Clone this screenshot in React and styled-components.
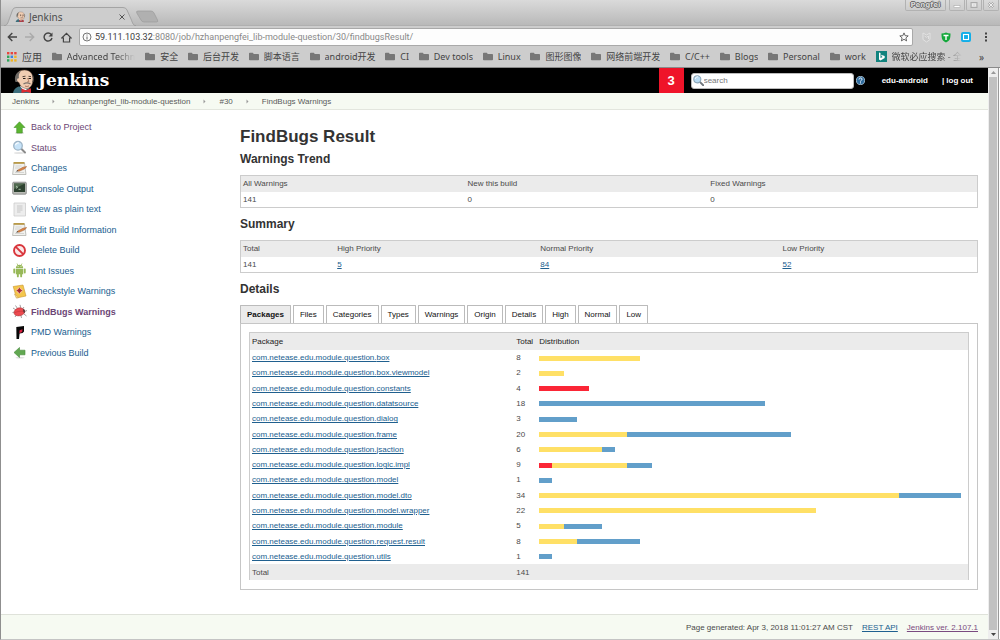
import React from "react";
import styled, { createGlobalStyle, css } from "styled-components";

const Global = createGlobalStyle`
  * { box-sizing: border-box; }
  body { margin: 0; background: #fff; color: #4a4a4a; font: 8px/12px "Liberation Sans", Arial, sans-serif; }
  button { padding: 0; border: 0; background: none; color: inherit; font: inherit; }
  svg { display: block; flex: none; }
  ul, ol { margin: 0; padding: 0; list-style: none; }
`;

const uiFont = css`font-family: "Noto Sans", "Noto Sans CJK SC", sans-serif;`;

/* ---------- browser frame ---------- */

const Window = styled.div`
  display: flex;
  flex-direction: column;
  min-height: 100vh;
  border-left: 1px solid #8f8f8f;
  border-bottom: 1px solid #c4c4c4;
`;

const TitleBar = styled.div`
  display: flex;
  align-items: flex-end;
  height: 26px;
  background: linear-gradient(#dadada, #b9b9b9);
  border-bottom: 1px solid #b0b0b0;
  ${uiFont}
`;

const TabShape = styled.div`
  position: relative;
  width: 132px;
  height: 19px;
  margin-bottom: -1px;
  margin-left: 3px;
  > svg { position: absolute; inset: 0; }
`;

const TabContent = styled.div`
  position: relative;
  display: flex;
  align-items: center;
  gap: 3px;
  height: 19px;
  padding: 0 11px;
  color: #4c4c4c;
  font-size: 10px;
  button { margin-left: auto; }
`;

const WindowButtons = styled.div`
  display: flex;
  align-self: flex-start;
  gap: 1px;
  margin-left: auto;
  padding-right: 1px;
`;

const WindowButton = styled.button`
  display: flex;
  align-items: center;
  justify-content: center;
  width: ${(p) => (p.$wide ? 41 : 16)}px;
  height: 11px;
  margin-right: ${(p) => (p.$wide ? 2 : 0)}px;
  border: 1px solid #b2b2b2;
  border-top: 0;
  border-radius: 0 0 2px 2px;
  color: #d8d8d8;
  font: bold 7px/10px "DejaVu Sans", sans-serif;
  text-shadow: 1px 0 #666, -1px 0 #666, 0 1px #666, 0 -1px #666;
`;

const Toolbar = styled.div`
  display: flex;
  align-items: center;
  gap: 8px;
  height: 22px;
  padding: 0 9px 0 6px;
  background: #cdcdcd;
`;

const IconButton = styled.button`
  display: flex;
  align-items: center;
  justify-content: center;
  width: 10px;
  height: 14px;
`;

const AddressBar = styled.label`
  display: flex;
  flex: 1;
  align-items: center;
  gap: 3px;
  height: 18px;
  padding: 0 3px 0 2px;
  border: 1px solid #a9a9a9;
  border-radius: 2px;
  background: #fdfdfd;
`;

const Url = styled.div`
  flex: 1;
  color: #888;
  font: 9px/12px Roboto, sans-serif;
  b { color: #3c3c3c; font-weight: 400; }
`;

const Extensions = styled.div`
  display: flex;
  align-items: center;
  gap: 10px;
`;

const Bookmarks = styled.nav`
  display: flex;
  align-items: center;
  justify-content: space-between;
  height: 20px;
  padding: 0 16px 2px 6px;
  border-bottom: 1px solid #8a8a8a;
  background: #cdcdcd;
`;

const Bookmark = styled.a`
  display: flex;
  align-items: center;
  gap: 5px;
  margin-left: ${(p) => (p.$apart ? 7 : 0)}px;
  color: #444;
  font-size: ${(p) => (p.$large ? 10 : 9)}px;
  white-space: nowrap;
  text-decoration: none;
  ${uiFont}
  span {
    max-width: 72px;
    overflow: hidden;
    ${(p) => p.$fade && css`mask-image: linear-gradient(90deg, #000 72%, transparent);`}
  }
`;

const Viewport = styled.div`
  display: flex;
  flex: 1;
`;

const Page = styled.div`
  display: flex;
  flex: 1;
  flex-direction: column;
  min-width: 0;
`;

const ScrollTrack = styled.div`
  display: flex;
  flex-direction: column;
  align-items: center;
  justify-content: space-between;
  width: 11px;
  margin-right: 1px;
  border-right: 1px solid #999;
  background: #eee;
`;

const ScrollArrow = styled.button`
  display: flex;
  align-items: center;
  justify-content: center;
  width: 9px;
  height: 9px;
`;

const ScrollThumb = styled.div`
  flex: 1;
  width: 8px;
  background: #c1c1c1;
`;

/* ---------- Jenkins page ---------- */

const Header = styled.header`
  display: flex;
  align-items: center;
  height: 25px;
  padding: 0 15px 0 11px;
  background: #000;
  color: #fff;
`;

const Brand = styled.a`
  display: flex;
  align-items: center;
  gap: 2px;
  margin-right: auto;
  color: #fff;
  font: bold 17px/25px "DejaVu Serif", serif;
  text-decoration: none;
`;

const Notice = styled.a`
  width: 25px;
  margin-right: 7px;
  background: #ef1429;
  color: #fff;
  font-size: 13px;
  font-weight: 700;
  line-height: 25px;
  text-align: center;
  text-decoration: none;
`;

const SearchBox = styled.label`
  display: flex;
  align-items: center;
  width: 163px;
  height: 16px;
  margin-right: 2px;
  padding: 0 1px;
  border: 1px solid #bbb;
  border-radius: 3px;
  background: #fff;
  input {
    flex: 1;
    min-width: 0;
    padding: 0;
    border: 0;
    outline: 0;
    background: none;
    font: inherit;
  }
  input::placeholder { color: #777; opacity: 1; }
`;

const HeaderLink = styled.a`
  margin-left: ${(p) => p.$gap}px;
  color: #fff;
  font-weight: 700;
  text-decoration: none;
`;

const Breadcrumbs = styled.ol`
  display: flex;
  align-items: center;
  gap: 13px;
  height: 17px;
  padding: 1px 0 0 11px;
  border-bottom: 1px solid #e3e6de;
  background: #f6faf2;
  li { display: flex; align-items: center; gap: 13px; }
  a { color: #5a5a5a; text-decoration: none; }
`;

const Body = styled.div`
  display: flex;
  flex: 1;
`;

const Sidebar = styled.nav`
  width: 239px;
  padding: 7px 11px;
`;

const TaskList = styled.ul`
  display: grid;
  grid-auto-rows: 1fr;
  height: 246px;
`;

const Task = styled.a`
  display: flex;
  align-items: center;
  gap: 4px;
  height: 100%;
  color: ${(p) => (p.$visited ? "#6b4675" : "#20608f")};
  font-size: 9px;
  font-weight: ${(p) => (p.$current ? 700 : 400)};
  text-decoration: none;
`;

const Main = styled.main`
  flex: 1;
  min-width: 0;
  padding: 17px 10px 24px 0;
`;

const Title = styled.h1`
  margin: 0 0 3px;
  color: #333;
  font-size: 17px;
  line-height: 20px;
`;

const Heading = styled.h2`
  margin: 0 0 7px;
  color: #333;
  font-size: 12px;
  line-height: 18px;
`;

const Table = styled.table`
  width: 100%;
  height: ${(p) => p.$height}px;
  margin-bottom: ${(p) => (p.$nested ? 0 : 7)}px;
  border: 1px solid #ccc;
  border-spacing: 0;
  table-layout: fixed;
  th, td { padding: 0 2px; text-align: left; font-weight: 400; }
  thead th, tfoot td { height: 16px; background: #ebebeb; }
  thead th { color: ${(p) => (p.$nested ? "#222" : "#4a4a4a")}; }
  ${(p) => p.$nested && css`
    border-bottom: 0;
    thead th { height: 17px; }
    tbody td, tfoot td { padding-top: 1px; }
    th:nth-child(2), td:nth-child(2) { padding-right: 0; }
  `}
`;

const Col = styled.col`
  width: ${(p) => p.$w};
`;

const TextLink = styled.a`
  color: ${(p) => (p.$visited ? "#7a4a80" : "#20608f")};
`;

const Tabs = styled.div`
  display: flex;
  gap: 2px;
`;

const Tab = styled.button`
  height: 18px;
  padding: 0 6px;
  border: 1px solid #bbb;
  border-bottom: 0;
  border-radius: 1px 1px 0 0;
  background: ${(p) => (p.$active ? "#ebebeb" : "#fff")};
  color: #111;
  font-weight: ${(p) => (p.$active ? 700 : 400)};
`;

const Panel = styled.section`
  padding: 8px 8px 9px;
  border: 1px solid #c6c6c6;
`;

const Bar = styled.div`
  display: flex;
  height: 5px;
  margin-right: 5px;
`;

const Segment = styled.span`
  background: ${(p) => p.$color};
`;

const Footer = styled.footer`
  display: flex;
  align-items: center;
  justify-content: flex-end;
  gap: 9px;
  height: 25px;
  padding: 1px 10px 0 0;
  border-top: 1px solid #dfe2da;
  background: #f6faf2;
`;

/* ---------- drawings ---------- */

const Butler = ({ w, h }) => (
  <svg width={w} height={h} viewBox="0 0 24 25" aria-hidden="true">
    <path d="M1 25c.5-3 2-5 5.500-6.500L17 20l2 2v3z" fill="#3d6f7c" />
    <path d="M8 18l4 5 5-3-1-3z" fill="#fff" />
    <path d="M4.500 10C4 5 7 2 12.500 2S21 5.500 21 11c0 5.500-2.500 9.500-6 9.500-4 0-7-2.500-8-6-2 0-3-3-2.500-4.500z" fill="#f0cdb2" stroke="#5b4034" strokeWidth=".5" />
    <path d="M3.500 14C2 9 3.500 4.500 9 3 6.500 5.500 6.500 8 7 10.500c-1.500-.7-2.500 1-1.500 3.500z" fill="#6d6a66" />
    <path d="M20.500 7c1.200 2 1.200 5 .3 7" fill="none" stroke="#55504c" strokeWidth="1" />
    <path d="M10.500 8.700l3-.5M16.500 8.300l2.500.3" stroke="#40332b" strokeWidth=".9" />
    <path d="M11 10.500h2.500M16.500 10.500H19" stroke="#221a16" strokeWidth="1.200" />
    <path d="M15.500 10l1.500 3.500-2 .5" stroke="#9c6650" strokeWidth=".7" fill="none" />
    <path d="M11.500 16c2-1.300 5-1.300 7 0" stroke="#7c716a" strokeWidth="1.300" fill="none" />
    <path d="M13 18c1.500.7 3 .5 4-.2" stroke="#8d493a" strokeWidth=".7" fill="none" />
    <path d="M9.500 20.500l4.500 1.700 5-2v4.800l-4.700-1.300-4.800 1.300z" fill="#dc2b30" />
  </svg>
);

const Lens = ({ size = 14 }) => (
  <svg width={size} height={size} viewBox="0 0 14 14">
    <path d="M9 9l4 4" stroke="#70777c" strokeWidth="2.400" strokeLinecap="round" />
    <circle cx="5.500" cy="5.500" r="4.500" fill="#b9dcf4" stroke="#8ba6b8" strokeWidth="1.400" />
    <path d="M3 5c0-2 2-3 3.500-2.600" stroke="#fff" strokeWidth="1.200" fill="none" />
  </svg>
);

const Folder = () => (
  <svg width="10" height="9" viewBox="0 0 10 9">
    <path d="M0 1.500Q0 .7.8.7h3l1 1.200h4.400q.8 0 .8.8v4.800q0 .8-.8.8H.8Q0 8.300 0 7.500z" fill="#777" />
  </svg>
);

const AppsGrid = () => (
  <svg width="10" height="10" viewBox="0 0 10 10">
    {["#e8453c", "#e8453c", "#e8453c", "#2fa65a", "#3b82e0", "#f0b323", "#2fa65a", "#f0b323", "#f0b323"].map((c, i) => (
      <rect key={i} x={(i % 3) * 3.6} y={Math.floor(i / 3) * 3.6} width="2.400" height="2.400" fill={c} />
    ))}
  </svg>
);

const Bing = () => (
  <svg width="11" height="11" viewBox="0 0 11 11">
    <path d="M0 0h11v11H0z" fill="#11837e" />
    <path d="M3 1.500l1.500.6v5L6.700 6l-.9-.5L5 3.800l3.700 1.300v2L4.500 9.500 3 8.500z" fill="#fff" />
  </svg>
);

const stroke = { fill: "none", stroke: "#444", strokeWidth: 1.4 };

const NotePad = () => (
  <>
    <path d="M2 2h10.500l1.500 11.500H.6z" fill="#f1f1ee" stroke="#b3b3ad" strokeWidth=".8" />
    <path d="M1.500 1h11v1.800h-11z" fill="#b99a48" />
    <path d="M3.500 5h6M3 7h5M3 11.500h9" stroke="#c9c9c5" strokeWidth=".7" />
    <path d="M5 9.600l6-3.400 3.700-.7-2 2.300L7 10.300z" fill="#da8446" stroke="#9c5a2f" strokeWidth=".5" />
    <path d="M3.800 10.600l1.600-1.300.9 1z" fill="#333" />
  </>
);

const taskArt = {
  up: (
    <>
      <ellipse cx="7.500" cy="13" rx="4.500" ry="1" fill="#ddd" />
      <path d="M7.500 1.800L13 7.500h-2.700V13H4.700V7.500H2z" fill="#5cb531" stroke="#43902a" strokeWidth=".6" />
    </>
  ),
  status: (
    <>
      <ellipse cx="7" cy="13" rx="5" ry="1" fill="#e4e4e4" />
      <path d="M9.500 9l3.500 3.500" stroke="#8a8a8a" strokeWidth="2" strokeLinecap="round" />
      <circle cx="6" cy="5.800" r="4.300" fill="#c7e3f8" stroke="#9fb6c8" strokeWidth="1.300" />
      <path d="M3.600 5.300c0-1.700 1.700-2.700 3.200-2.300" stroke="#fff" strokeWidth="1.100" fill="none" />
    </>
  ),
  notepad: <NotePad />,
  console: (
    <>
      <rect x=".7" y="1.200" width="13.600" height="12" rx="1" fill="#b9bbb5" stroke="#777" strokeWidth=".7" />
      <rect x="2" y="2.500" width="11" height="8.500" fill="#2e4230" />
      <path d="M2 2.500h11L2 8z" fill="#50694f" />
      <path d="M4 5l1.700 1.200L4 7.400M6.500 8.300h2.200" stroke="#c4dcc0" strokeWidth=".8" fill="none" />
    </>
  ),
  text: (
    <>
      <path d="M2 1h11.500v13H2z" fill="#ededed" stroke="#cdcdcd" strokeWidth=".8" />
      <path d="M5 4h5.500M5 6h5.500M5 8h5.500M5 10h3.500" stroke="#c6c6c6" />
    </>
  ),
  del: (
    <>
      <circle cx="7.500" cy="7.500" r="5.500" fill="#fbe9e9" stroke="#d9363c" strokeWidth="1.900" />
      <path d="M3.600 3.600l7.800 7.800" stroke="#d9363c" strokeWidth="1.900" />
    </>
  ),
  android: (
    <g fill="#97b858">
      <path d="M3.800 5C4 2.800 5.600 1.700 7.500 1.700S11 2.800 11.200 5z" />
      <path d="M5 .5l1 2M10 .5l-1 2" stroke="#97b858" strokeWidth=".7" />
      <path d="M3.800 5.600h7.400v5.700H3.800z" />
      <rect x="1.300" y="5.500" width="1.900" height="5" rx=".9" />
      <rect x="11.800" y="5.500" width="1.900" height="5" rx=".9" />
      <rect x="4.900" y="10" width="1.900" height="4.300" rx=".9" />
      <rect x="8.200" y="10" width="1.900" height="4.300" rx=".9" />
      <path d="M5.700 3.300h.8v.8h-.8zM8.600 3.300h.8v.8h-.8z" fill="#fff" />
    </g>
  ),
  checkstyle: (
    <>
      <path d="M1.200 2.500L11 1l3 11-9.500 2z" fill="#f4c64b" stroke="#c99531" strokeWidth=".6" />
      <path d="M7.400 3l3.600 3.600-3.600 3.600L3.800 6.600z" fill="#f3d7c0" />
      <path d="M7.400 3.900l2.700 2.700-2.700 2.700-2.700-2.700z" fill="#cf2a2f" />
      <path d="M7.400 3.500v6M4.400 6.600h6" stroke="#7c3a3a" strokeWidth=".6" />
      <path d="M4.500 14l-2.200-4 4 3.600z" fill="#fff0b8" stroke="#b98c30" strokeWidth=".4" />
    </>
  ),
  bug: (
    <>
      <path d="M3.500 1.500l2 3M8 .8l.7 3M1 4l3 2M.5 8.500l3-.5M3 13l2-3M9.500 14l-.7-3M12 3l-1.500 2M15 6.500l-2.500 1M14.500 12L12 10" stroke="#7b7272" strokeWidth=".7" />
      <path d="M2 8.500C2.500 5 6.500 3 10 4.200c2.500.9 3.500 3.300 2 5.300-2 2.500-6 3-8.300 1.800C2.400 10.600 1.900 9.600 2 8.500z" fill="#ec4a4f" stroke="#a03336" strokeWidth=".5" />
      <path d="M11 4.700c2 .6 2.800 2.800 1.500 4.600-1.300-.9-1.900-2.900-1.500-4.600z" fill="#6a3b3c" />
      <path d="M3 8.600c2.500-1.200 5-1.500 8-1.300" stroke="#b83236" strokeWidth=".5" fill="none" />
    </>
  ),
  pmd: (
    <>
      <path d="M4.300 2L12 1v5.500L10.600 8l-3 .6L7 14H4.500z" fill="#080808" />
      <path d="M7.600 5.200l2.900-1-.3 2.800-2.900 1.200z" fill="#d8203f" />
    </>
  ),
  left: (
    <>
      <ellipse cx="8" cy="12.800" rx="4.500" ry=".8" fill="#ddd" />
      <path d="M2 7.500L7.500 2.500v2.700H13v4.600H7.500v2.700z" fill="#62a852" stroke="#468a3a" strokeWidth=".6" />
    </>
  ),
};

const TaskIcon = ({ name }) => (
  <svg width="15" height="15" viewBox="0 0 15 15">{taskArt[name]}</svg>
);

/* ---------- data ---------- */

const bookmarks = [
  ["Advanced Techn", true], ["安全"], ["后台开发"], ["脚本语言"], ["android开发"], ["CI"], ["Dev tools"], ["Linux"],
  ["图形图像"], ["网络前端开发"], ["C/C++"], ["Blogs"], ["Personal"], ["work"],
];

const tasks = [
  ["up", "Back to Project", true], ["status", "Status", true], ["notepad", "Changes"],
  ["console", "Console Output"], ["text", "View as plain text"], ["notepad", "Edit Build Information"],
  ["del", "Delete Build"], ["android", "Lint Issues"], ["checkstyle", "Checkstyle Warnings"],
  ["bug", "FindBugs Warnings", true, true], ["pmd", "PMD Warnings"], ["left", "Previous Build"],
];

const crumbs = ["Jenkins", "hzhanpengfei_lib-module-question", "#30", "FindBugs Warnings"];
const tabs = ["Packages", "Files", "Categories", "Types", "Warnings", "Origin", "Details", "High", "Normal", "Low"];

/* name, then the counts of high, normal and low priority warnings */
const packages = [
  ["box", 0, 8, 0], ["box.viewmodel", 0, 2, 0], ["constants", 4, 0, 0], ["datatsource", 0, 0, 18],
  ["dialog", 0, 0, 3], ["frame", 0, 7, 13], ["jsaction", 0, 5, 1], ["logic.impl", 1, 6, 2],
  ["model", 0, 0, 1], ["model.dto", 0, 29, 5], ["model.wrapper", 0, 22, 0], ["module", 0, 2, 3],
  ["request.result", 0, 3, 5], ["utils", 0, 0, 1],
];
const colors = ["#fb2636", "#ffe066", "#629fca"];
const percentPerWarning = 2.98;

const CountTable = ({ heads, cells, widths }) => (
  <Table $height={33}>
    <colgroup>{widths.map((w, i) => <Col key={i} $w={w} />)}</colgroup>
    <thead><tr>{heads.map((h) => <th key={h} scope="col">{h}</th>)}</tr></thead>
    <tbody><tr>{cells.map((c, i) => <td key={i}>{c}</td>)}</tr></tbody>
  </Table>
);

export default function App() {
  return (
    <Window>
      <Global />
      <TitleBar>
        <TabShape>
          <svg width="132" height="19" viewBox="0 0 132 19">
            <path d="M0 19C4 18 4 15 6 10L8.500 3Q9.500 .5 12 .5h107q3 0 4 2.500l4 9c2 5 2 6 5 7z" fill="#cdcdcd" stroke="#999" strokeWidth=".8" />
          </svg>
          <TabContent>
            <Butler w={11} h={11} />
            Jenkins
            <button aria-label="Close tab">
              <svg width="6" height="6" viewBox="0 0 6 6"><path d="M.5.5l5 5M5.500.5l-5 5" stroke="#555" /></svg>
            </button>
          </TabContent>
        </TabShape>
        <button aria-label="New tab">
          <svg width="24" height="16" viewBox="0 0 24 16">
            <path d="M2 2h13q2 0 3 2l3.500 7q1 2-1 2H8Q6 13 5 11L.8 4Q0 2 2 2z" fill="#b0b0b0" stroke="#9b9b9b" strokeWidth=".7" />
          </svg>
        </button>
        <WindowButtons>
          <WindowButton $wide>Pengfei</WindowButton>
          <WindowButton aria-label="Minimize">
            <svg width="8" height="8" viewBox="0 0 8 8"><rect x="1" y="4.500" width="6" height="2" fill="#fff" stroke="#aaa" strokeWidth=".6" /></svg>
          </WindowButton>
          <WindowButton aria-label="Maximize">
            <svg width="8" height="8" viewBox="0 0 8 8"><rect x="1" y="1.500" width="6" height="5" fill="none" stroke="#aaa" /><rect x="2.500" y="3" width="3" height="2" fill="none" stroke="#eee" strokeWidth=".8" /></svg>
          </WindowButton>
          <WindowButton aria-label="Close">
            <svg width="8" height="8" viewBox="0 0 8 8"><path d="M1.500 1.500l5 5M6.500 1.500l-5 5" stroke="#aaa" strokeWidth="2" /><path d="M1.500 1.500l5 5M6.500 1.500l-5 5" stroke="#eee" /></svg>
          </WindowButton>
        </WindowButtons>
      </TitleBar>

      <Toolbar>
        <IconButton aria-label="Back">
          <svg width="10" height="10" viewBox="0 0 10 10"><path d="M10 5H1.500M5.300 1L1.300 5l4 4" {...stroke} /></svg>
        </IconButton>
        <IconButton aria-label="Forward">
          <svg width="10" height="10" viewBox="0 0 10 10"><path d="M0 5h8.500M4.700 1l4 4-4 4" {...stroke} stroke="#aaa" /></svg>
        </IconButton>
        <IconButton aria-label="Reload">
          <svg width="10" height="10" viewBox="0 0 10 10"><path d="M8.300 2.600A4 4 0 1 0 9 6" {...stroke} /><path d="M9.500.5v4h-4z" fill="#444" /></svg>
        </IconButton>
        <IconButton aria-label="Home">
          <svg width="11" height="11" viewBox="0 0 11 11"><path d="M.8 6l4.700-4.700L10.200 6H8.600v4H2.400V6z" {...stroke} strokeWidth="1.200" /></svg>
        </IconButton>
        <AddressBar>
          <svg width="10" height="10" viewBox="0 0 10 10">
            <circle cx="5" cy="5" r="4" fill="none" stroke="#666" strokeWidth=".9" />
            <path d="M5 4.500v3M5 2.500v1" stroke="#666" />
          </svg>
          <Url><b>59.111.103.32</b>:8080/job/hzhanpengfei_lib-module-question/30/findbugsResult/</Url>
          <IconButton aria-label="Bookmark this page">
            <svg width="10" height="10" viewBox="0 0 10 10"><path d="M5 .9l1.200 2.800 3 .2-2.300 2 .7 3L5 7.300 2.400 8.900l.7-3-2.300-2 3-.2z" fill="none" stroke="#555" strokeWidth=".9" /></svg>
          </IconButton>
        </AddressBar>
        <Extensions>
          <IconButton aria-label="Site advisor">
            <svg width="9" height="11" viewBox="0 0 9 11"><path d="M1 1l3.500 2L8 1v6.500L4.500 10 1 7.500z" fill="#c8c8c8" stroke="#e2e2e2" /><path d="M2.500 4l2 1.300 2-1.300v3" fill="none" stroke="#e2e2e2" /></svg>
          </IconButton>
          <IconButton aria-label="Shield">
            <svg width="10" height="11" viewBox="0 0 10 11"><path d="M.5 1.500Q3 1.500 5 .5q2 1 4.500 1C9.500 6 9 9 5 10.500 1 9 .5 6 .5 1.500z" fill="#14a83b" /><path d="M2.500 3.500h5M5 3.500v4.500" stroke="#fff" strokeWidth="1.400" /></svg>
          </IconButton>
          <IconButton aria-label="Capture">
            <svg width="10" height="10" viewBox="0 0 10 10"><rect width="10" height="10" rx="2" fill="#12aee8" /><rect x="2.500" y="2.500" width="5" height="5" fill="none" stroke="#fff" strokeWidth="1.100" /></svg>
          </IconButton>
          <IconButton aria-label="Menu">
            <svg width="4" height="10" viewBox="0 0 4 10"><path d="M1 .5h2v2H1zM1 4h2v2H1zM1 7.500h2v2H1z" fill="#444" /></svg>
          </IconButton>
        </Extensions>
      </Toolbar>

      <Bookmarks>
        <Bookmark href="#" $large><AppsGrid /><span>应用</span></Bookmark>
        {bookmarks.map(([name, fade]) => (
          <Bookmark key={name} href="#" $fade={fade}>
            <Folder /><span>{name}</span>
          </Bookmark>
        ))}
        <Bookmark href="#" $fade><Bing /><span>微软必应搜索 - 全</span></Bookmark>
        <Bookmark href="#" $large $apart><span>»</span></Bookmark>
      </Bookmarks>

      <Viewport>
        <Page>
          <Header>
            <Brand href="#"><Butler w={24} h={25} />Jenkins</Brand>
            <Notice href="#">3</Notice>
            <SearchBox>
              <Lens size={11} />
              <input type="text" placeholder="search" aria-label="Search" />
            </SearchBox>
            <svg width="9" height="9" viewBox="0 0 9 9">
              <circle cx="4.500" cy="4.500" r="4.100" fill="#2f6c9e" stroke="#b9d3e6" strokeWidth=".8" />
              <path d="M3 3.500c0-2 3-2 3-.2 0 1-1.500 1-1.500 2.200M4.500 6.400v1" stroke="#fff" fill="none" />
            </svg>
            <HeaderLink href="#" $gap={17}>edu-android</HeaderLink>
            <HeaderLink href="#" $gap={14}>| log out</HeaderLink>
          </Header>
          <Breadcrumbs>
            {crumbs.map((c, i) => (
              <li key={c}>
                <a href="#">{c}</a>
                {i < crumbs.length - 1 && (
                  <svg width="3" height="5" viewBox="0 0 3 5"><path d="M.5.5l2 2-2 2z" fill="#999" /></svg>
                )}
              </li>
            ))}
          </Breadcrumbs>
          <Body>
            <Sidebar>
              <TaskList>
                {tasks.map(([icon, label, visited, current]) => (
                  <li key={label}>
                    <Task href="#" $visited={visited} $current={current}>
                      <TaskIcon name={icon} />{label}
                    </Task>
                  </li>
                ))}
              </TaskList>
            </Sidebar>
            <Main>
              <Title>FindBugs Result</Title>
              <Heading>Warnings Trend</Heading>
              <CountTable
                heads={["All Warnings", "New this build", "Fixed Warnings"]}
                cells={["141", "0", "0"]}
                widths={["30.5%", "33%", "auto"]}
              />
              <Heading>Summary</Heading>
              <CountTable
                heads={["Total", "High Priority", "Normal Priority", "Low Priority"]}
                cells={["141", ...["5", "84", "52"].map((n) => <TextLink key={n} href="#">{n}</TextLink>)]}
                widths={["12.8%", "27.6%", "32.9%", "auto"]}
              />
              <Heading>Details</Heading>
              <Tabs role="tablist">
                {tabs.map((t, i) => (
                  <Tab key={t} role="tab" aria-selected={i === 0} $active={i === 0}>{t}</Tab>
                ))}
              </Tabs>
              <Panel>
                <Table $nested $height={248}>
                  <colgroup><Col $w="36.8%" /><Col $w="23px" /><Col $w="auto" /></colgroup>
                  <thead>
                    <tr><th scope="col">Package</th><th scope="col">Total</th><th scope="col">Distribution</th></tr>
                  </thead>
                  <tbody>
                    {packages.map(([name, ...counts]) => (
                      <tr key={name}>
                        <td><TextLink href="#">com.netease.edu.module.question.{name}</TextLink></td>
                        <td>{counts.reduce((a, b) => a + b)}</td>
                        <td>
                          <Bar>
                            {counts.map((n, i) => n > 0 && (
                              <Segment key={i} $color={colors[i]} style={{ width: `${n * percentPerWarning}%` }} />
                            ))}
                          </Bar>
                        </td>
                      </tr>
                    ))}
                  </tbody>
                  <tfoot><tr><td>Total</td><td>141</td><td /></tr></tfoot>
                </Table>
              </Panel>
            </Main>
          </Body>
          <Footer>
            <span>Page generated: Apr 3, 2018 11:01:27 AM CST</span>
            <TextLink href="#">REST API</TextLink>
            <TextLink href="#" $visited>Jenkins ver. 2.107.1</TextLink>
          </Footer>
        </Page>
        <ScrollTrack>
          <ScrollArrow aria-label="Scroll up">
            <svg width="5" height="3" viewBox="0 0 5 3"><path d="M0 3L2.500 0 5 3z" fill="#999" /></svg>
          </ScrollArrow>
          <ScrollThumb />
          <ScrollArrow aria-label="Scroll down">
            <svg width="5" height="3" viewBox="0 0 5 3"><path d="M0 0h5L2.500 3z" fill="#444" /></svg>
          </ScrollArrow>
        </ScrollTrack>
      </Viewport>
    </Window>
  );
}
